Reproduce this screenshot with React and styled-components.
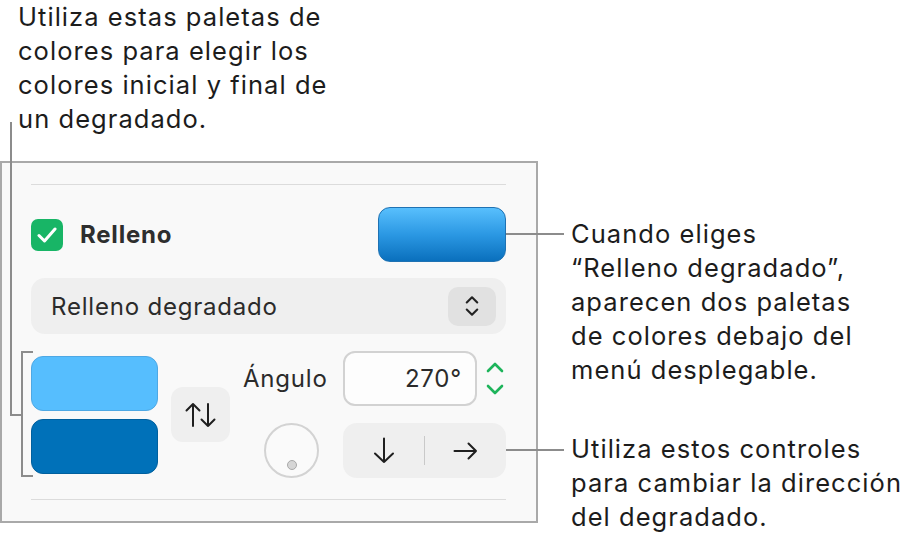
import styled, { createGlobalStyle } from "styled-components";

const GlobalStyle = createGlobalStyle`
  html, body {
    margin: 0;
    padding: 0;
    background: #ffffff;
  }
  body {
    font-family: Inter, "Noto Sans", "Liberation Sans", sans-serif;
    color: #1c1c1c;
  }
`;

const Page = styled.div`
  position: relative;
  width: 902px;
  height: 543px;
  overflow: hidden;
`;

const Note = styled.p`
  margin: 0;
  font-size: 25.5px;
  letter-spacing: 1.05px;
  line-height: 34px;
  color: #1c1c1c;
  white-space: pre;
`;

const TopNote = styled(Note)`
  padding: 0 0 0 18px;
  height: 137px;
`;

const Main = styled.div`
  display: flex;
  align-items: flex-start;
  margin-top: 24px;
`;

const Panel = styled.section`
  flex: none;
  width: 538px;
  box-sizing: border-box;
  border: 2px solid #a9a9a9;
  background: #f9f9f9;
  padding: 0 30px 21px 29px;
  display: flex;
  flex-direction: column;
  font-size: 24px;
  letter-spacing: 0.8px;
  color: #2b2b2b;
`;

const Separator = styled.hr`
  margin: 21px 0 0;
  border: none;
  height: 1px;
  background: #dcdcdc;
`;

const FillRow = styled.div`
  margin-top: 22px;
  height: 55px;
  display: flex;
  align-items: center;
  justify-content: space-between;
`;

const CheckLabel = styled.label`
  display: flex;
  align-items: center;
  gap: 17px;
  font-weight: 700;
  color: #2e2e2e;
`;

const CheckBox = styled.span`
  width: 32px;
  height: 32px;
  border-radius: 7px;
  background: #18b566;
  display: flex;
  align-items: center;
  justify-content: center;
`;

const ColorWell = styled.div`
  width: 128px;
  height: 55px;
  box-sizing: border-box;
  border-radius: 12px;
  border: 1px solid ${(p) => p.$edge};
  background: ${(p) => p.$fill};
`;

const Popup = styled.div`
  margin-top: 16px;
  height: 56px;
  border-radius: 14px;
  background: #efefef;
  display: flex;
  align-items: center;
  justify-content: space-between;
  padding: 0 10px 0 20px;
`;

const PopupStepper = styled.span`
  width: 48px;
  height: 39px;
  border-radius: 10px;
  background: #e1e1e1;
  display: flex;
  align-items: center;
  justify-content: center;
`;

const GradientArea = styled.div`
  margin-top: 17px;
  height: 127px;
  display: flex;
  align-items: center;
  gap: 13px;
`;

const SwatchColumn = styled.div`
  display: flex;
  flex-direction: column;
  gap: 8px;
`;

const Swatch = styled(ColorWell)`
  width: 127px;
`;

const SoftButton = styled.button`
  width: 59px;
  height: 55px;
  border: none;
  border-radius: 12px;
  background: #efefef;
  display: flex;
  align-items: center;
  justify-content: center;
  padding: 0;
`;

const AngleGrid = styled.div`
  display: grid;
  grid-template-columns: 100px 163px;
  grid-template-rows: 55px 55px;
  row-gap: 17px;
  align-items: center;
`;

const FieldGroup = styled.div`
  display: flex;
  align-items: center;
  gap: 9px;
`;

const AngleField = styled.div`
  width: 134px;
  height: 55px;
  box-sizing: border-box;
  border: 2px solid #d2d2d2;
  border-radius: 12px;
  background: #fdfdfd;
  display: flex;
  align-items: center;
  justify-content: flex-end;
  padding-right: 13px;
`;

const Stepper = styled.div`
  display: flex;
  flex-direction: column;
  gap: 11px;
`;

const Wheel = styled.div`
  position: relative;
  margin-left: 21px;
  width: 55px;
  height: 55px;
  box-sizing: border-box;
  border-radius: 50%;
  border: 2px solid #d3d3d3;
  background: #fafafa;
`;

const WheelDot = styled.span`
  position: absolute;
  left: 50%;
  bottom: 6px;
  width: 10px;
  height: 10px;
  margin-left: -5px;
  box-sizing: border-box;
  border-radius: 50%;
  background: #d6d6d6;
  border: 1px solid #a9a9a9;
`;

const Segmented = styled.div`
  height: 55px;
  border-radius: 14px;
  background: #efefef;
  display: grid;
  grid-template-columns: 1fr 1px 1fr;
  align-items: center;
`;

const Segment = styled.span`
  display: flex;
  justify-content: center;
  align-items: center;
`;

const SegDivider = styled.span`
  height: 29px;
  background: #c9c9c9;
`;

const Side = styled.div`
  padding-left: 33px;
  display: flex;
  flex-direction: column;
`;

const Callout = styled(Note)`
  position: relative;
  margin-top: ${(p) => p.$top}px;

  &::before {
    content: "";
    position: absolute;
    left: -65px;
    top: ${(p) => p.$lead}px;
    width: 58px;
    height: 2px;
    background: #8c8c8c;
  }
`;

const ElbowLeader = styled.span`
  position: absolute;
  left: 10px;
  top: 122px;
  width: 11px;
  height: 292px;
  border-left: 2px solid #8c8c8c;
  border-bottom: 2px solid #8c8c8c;
`;

const Bracket = styled.span`
  position: absolute;
  left: 21px;
  top: 351px;
  width: 10px;
  height: 122px;
  border: 2px solid #8c8c8c;
  border-right: none;
`;

const Check = () => (
  <svg width="20" height="16" viewBox="0 0 20 16" fill="none">
    <path d="M2 8.5 L7.5 14 L18 2" stroke="#fff" strokeWidth="3" strokeLinecap="round" strokeLinejoin="round" />
  </svg>
);

const UpDown = () => (
  <svg width="14" height="24" viewBox="0 0 16 26" fill="none">
    <path d="M2 9 L8 3 L14 9 M2 17 L8 23 L14 17" stroke="#222" strokeWidth="2.4" strokeLinecap="round" strokeLinejoin="round" />
  </svg>
);

const Chevron = ({ up }) => (
  <svg width="18" height="11" viewBox="0 0 18 11" fill="none">
    <path d={up ? "M2 9 L9 2 L16 9" : "M2 2 L9 9 L16 2"} stroke="#1eb45b" strokeWidth="2.6" strokeLinecap="round" strokeLinejoin="round" />
  </svg>
);

const SwapIcon = () => (
  <svg width="31" height="26" viewBox="0 0 31 26" fill="none" stroke="#1f1f1f" strokeWidth="2" strokeLinecap="round" strokeLinejoin="round">
    <path d="M8 24 V2 M1.5 8.5 L8 2 L14.5 8.5" />
    <path d="M23 2 V24 M16.5 17.5 L23 24 L29.5 17.5" />
  </svg>
);

const DownArrow = () => (
  <svg width="22" height="27" viewBox="0 0 22 27" fill="none" stroke="#1f1f1f" strokeWidth="2" strokeLinecap="round" strokeLinejoin="round">
    <path d="M11 1.5 V25 M2 16.5 L11 25 L20 16.5" />
  </svg>
);

const RightArrow = () => (
  <svg width="25" height="18" viewBox="0 0 25 18" fill="none" stroke="#1f1f1f" strokeWidth="2" strokeLinecap="round" strokeLinejoin="round">
    <path d="M1.5 9 H23 M15.5 1.5 L23 9 L15.5 16.5" />
  </svg>
);

export default function App() {
  return (
    <Page>
      <GlobalStyle />
      <TopNote>
        {"Utiliza estas paletas de\ncolores para elegir los\ncolores inicial y final de\nun degradado."}
      </TopNote>
      <Main>
        <Panel>
          <Separator />
          <FillRow>
            <CheckLabel>
              <CheckBox>
                <Check />
              </CheckBox>
              Relleno
            </CheckLabel>
            <ColorWell
              $edge="#1f72b3"
              $fill="linear-gradient(180deg, #58bffd 0%, #2b98e3 50%, #0a70bd 100%)"
            />
          </FillRow>
          <Popup>
            Relleno degradado
            <PopupStepper>
              <UpDown />
            </PopupStepper>
          </Popup>
          <GradientArea>
            <SwatchColumn>
              <Swatch $edge="#4ea8e4" $fill="#56befe" />
              <Swatch $edge="#00609e" $fill="#0071b9" />
            </SwatchColumn>
            <SoftButton>
              <SwapIcon />
            </SoftButton>
            <AngleGrid>
              <span>Ángulo</span>
              <FieldGroup>
                <AngleField>270°</AngleField>
                <Stepper>
                  <Chevron up />
                  <Chevron />
                </Stepper>
              </FieldGroup>
              <Wheel>
                <WheelDot />
              </Wheel>
              <Segmented>
                <Segment>
                  <DownArrow />
                </Segment>
                <SegDivider />
                <Segment>
                  <RightArrow />
                </Segment>
              </Segmented>
            </AngleGrid>
          </GradientArea>
          <Separator />
        </Panel>
        <Side>
          <Callout $top={56} $lead={16}>
            {"Cuando eliges\n“Relleno degradado”,\naparecen dos paletas\nde colores debajo del\nmenú desplegable."}
          </Callout>
          <Callout $top={45} $lead={17}>
            {"Utiliza estos controles\npara cambiar la dirección\ndel degradado."}
          </Callout>
        </Side>
      </Main>
      <ElbowLeader />
      <Bracket />
    </Page>
  );
}
